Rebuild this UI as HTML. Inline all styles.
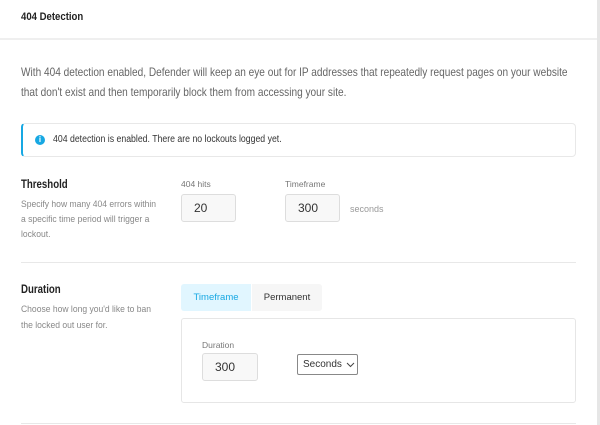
<!DOCTYPE html>
<html><head><style>
*{margin:0;padding:0;box-sizing:border-box}
body{width:600px;height:425px;background:#fff;font-family:"Liberation Sans",sans-serif;position:relative;overflow:hidden;color:#333}
.a{position:absolute;white-space:nowrap;transform-origin:0 0}
.inp{position:absolute;background:#f8f8f8;border:1px solid #ddd;border-radius:3px;font-size:12px;color:#333;padding-left:12px;display:flex;align-items:center}
.lbl{position:absolute;font-size:8.5px;color:#777}
</style></head><body>
<div style="position:absolute;left:597px;top:0;width:3px;height:425px;background:#e6e6e6"></div>
<div class="a" style="left:21px;top:11px;font-size:11px;font-weight:bold;color:#222;transform:scaleX(.87)">404 Detection</div>
<div style="position:absolute;left:0;top:38px;width:597px;height:2px;background:#efefef"></div>
<div class="a" style="left:21px;top:63px;font-size:11.6px;color:#666;line-height:20px;transform:scaleX(.87)">With 404 detection enabled, Defender will keep an eye out for IP addresses that repeatedly request pages on your website<br>that don't exist and then temporarily block them from accessing your site.</div>
<div style="position:absolute;left:21px;top:123px;width:555px;height:34px;border:1px solid #e8e8e8;border-left:2px solid #17a8e3;border-radius:4px"></div>
<div style="position:absolute;left:35px;top:135px;width:10px;height:10px;border-radius:50%;background:#17a8e3;color:#fff;font-size:8px;font-weight:bold;text-align:center;line-height:10px">i</div>
<div class="a" style="left:53px;top:134px;font-size:9.8px;color:#333;transform:scaleX(.89)">404 detection is enabled. There are no lockouts logged yet.</div>

<div class="a" style="left:21px;top:179px;font-size:11.5px;font-weight:bold;color:#222;transform:scaleX(.84)">Threshold</div>
<div class="a" style="left:21px;top:197px;font-size:9.3px;color:#888;line-height:15px;transform:scaleX(.92)">Specify how many 404 errors within<br>a specific time period will trigger a<br>lockout.</div>
<div class="lbl" style="left:181px;top:179px">404 hits</div>
<div class="inp" style="left:181px;top:194px;width:55px;height:28px">20</div>
<div class="lbl" style="left:285px;top:179px">Timeframe</div>
<div class="inp" style="left:285px;top:194px;width:55px;height:28px">300</div>
<div class="a" style="left:350px;top:204px;font-size:9px;color:#999">seconds</div>
<div style="position:absolute;left:21px;top:262px;width:555px;height:1px;background:#e8e8e8"></div>

<div class="a" style="left:21px;top:284px;font-size:11.5px;font-weight:bold;color:#222;transform:scaleX(.84)">Duration</div>
<div class="a" style="left:21px;top:301px;font-size:9.3px;color:#888;line-height:16px;transform:scaleX(.92)">Choose how long you'd like to ban<br>the locked out user for.</div>
<div style="position:absolute;left:181px;top:284px;width:70px;height:27px;background:#e1f6ff;color:#17a8e3;font-size:9.5px;text-align:center;line-height:27px;border-radius:3px 0 0 3px">Timeframe</div>
<div style="position:absolute;left:252px;top:284px;width:70px;height:27px;background:#f6f6f6;color:#333;font-size:9.5px;text-align:center;line-height:27px;border-radius:0 3px 3px 0">Permanent</div>
<div style="position:absolute;left:181px;top:318px;width:395px;height:85px;border:1px solid #e6e6e6;border-radius:3px"></div>
<div class="lbl" style="left:202px;top:340px">Duration</div>
<div class="inp" style="left:202px;top:353px;width:56px;height:28px">300</div>
<div style="position:absolute;left:297px;top:354px;width:61px;height:21px;border:1px solid #888;border-radius:2px;font-size:10px;color:#333;padding-left:5px;line-height:19px">Seconds
<svg style="position:absolute;left:48px;top:7px" width="9" height="6" viewBox="0 0 9 6"><path d="M1 1l3.5 3.5L8 1" fill="none" stroke="#444" stroke-width="1"/></svg></div>
<div style="position:absolute;left:21px;top:423px;width:555px;height:1px;background:#e8e8e8"></div>
</body></html>
